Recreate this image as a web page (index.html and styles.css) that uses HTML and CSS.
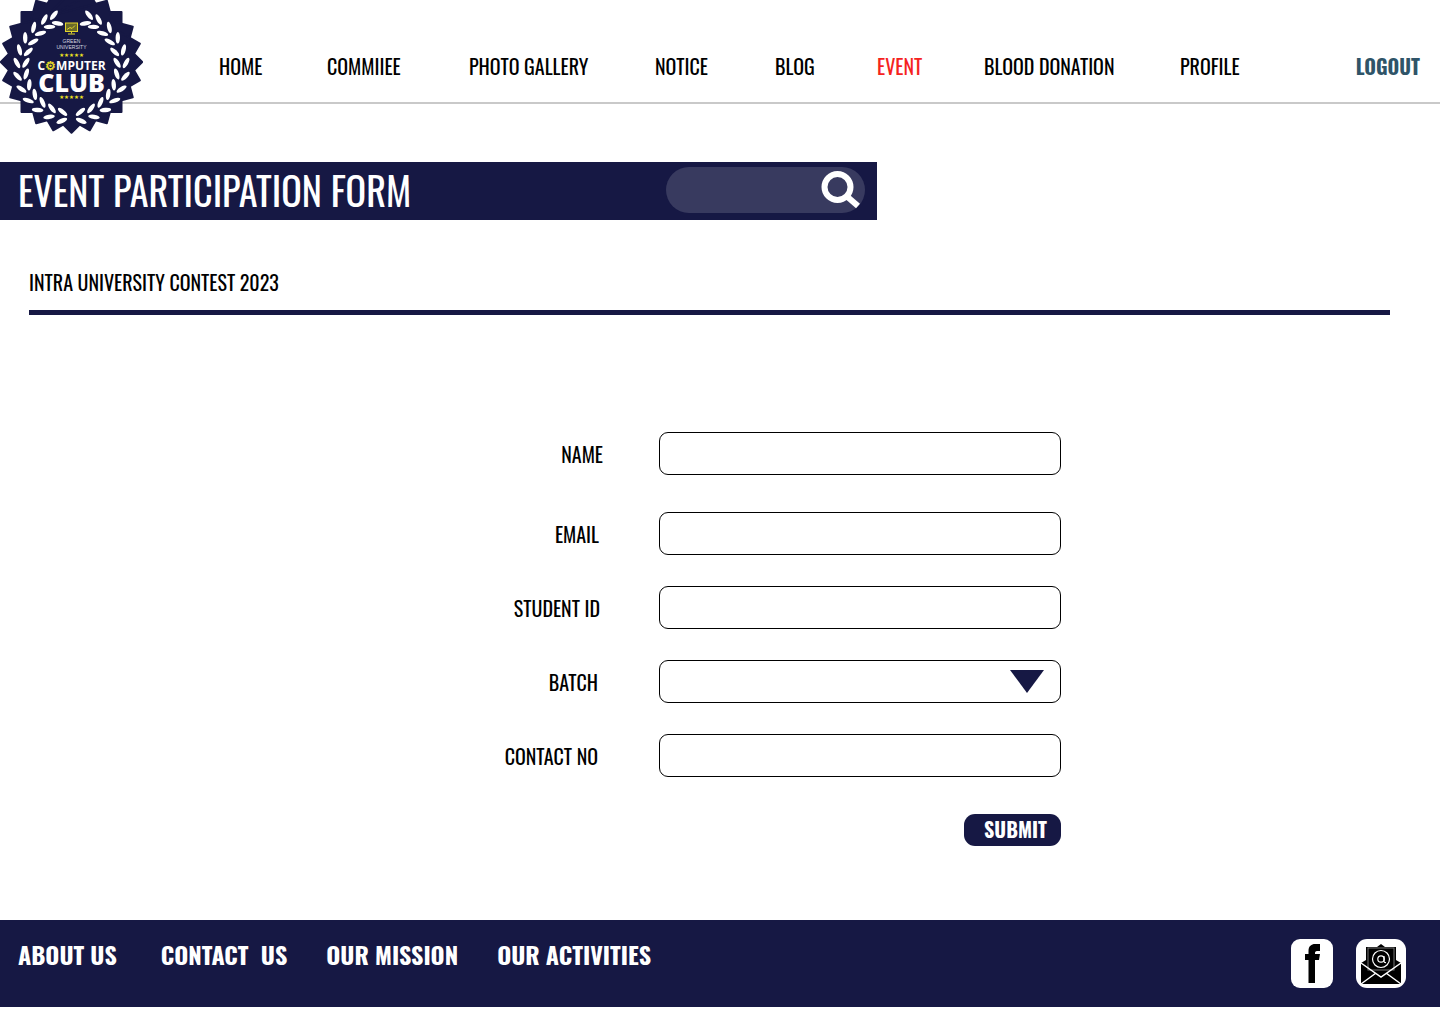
FILE: index.html
```html
<!DOCTYPE html>
<html lang="en">
<head>
<meta charset="utf-8">
<title>Event Participation Form</title>
<link rel="stylesheet" href="styles.css">
</head>
<body>
<header class="site-header">
  <svg class="logo" viewBox="0 9 143 134" width="143" height="134" role="img" aria-label="Green University Computer Club">
    <defs>
      <rect id="sq" x="-50" y="-50" width="100" height="100"/>
      <g id="pair">
        <ellipse cx="-5" cy="45.500" rx="5.800" ry="2.200" transform="rotate(34 -5 45.500)"/>
        <ellipse cx="-5" cy="54.500" rx="5.800" ry="2.200" transform="rotate(-28 -5 54.500)"/>
      </g>
      <g id="wreath" fill="#fff">
        <use href="#pair" transform="rotate(5)"/>
        <use href="#pair" transform="rotate(19)"/>
        <use href="#pair" transform="rotate(33)"/>
        <use href="#pair" transform="rotate(47)"/>
        <use href="#pair" transform="rotate(61)"/>
        <use href="#pair" transform="rotate(75)"/>
        <use href="#pair" transform="rotate(89)"/>
        <use href="#pair" transform="rotate(103)"/>
        <use href="#pair" transform="rotate(117)"/>
        <use href="#pair" transform="rotate(131)"/>
        <use href="#pair" transform="rotate(145)"/>
        <use href="#pair" transform="rotate(156)"/>
      </g>
    </defs>
    <g transform="translate(71.5 71)" fill="#161844" stroke="#161844" stroke-width="2" stroke-linejoin="round">
      <use href="#sq"/>
      <use href="#sq" transform="rotate(15)"/>
      <use href="#sq" transform="rotate(30)"/>
      <use href="#sq" transform="rotate(45)"/>
      <use href="#sq" transform="rotate(60)"/>
      <use href="#sq" transform="rotate(75)"/>
    </g>
    <use href="#wreath" transform="translate(71.5 76)"/>
    <use href="#wreath" transform="translate(71.5 76) scale(-1 1)"/>
    <g fill="none" stroke="#e3d52b" stroke-width="1">
      <rect x="65.500" y="32" width="12" height="8.500" fill="#6a6a2a"/>
      <path d="M71.500 40.500v2M68 43h7M67 38.500l3-2 2 1 3-3"/>
    </g>
    <text class="logo-small" x="71.500" y="52">GREEN</text>
    <text class="logo-small" x="71.500" y="58">UNIVERSITY</text>
    <text class="logo-stars" x="71.500" y="66">★★★★★</text>
    <text class="logo-computer" x="71.500" y="79">C<tspan fill="#e3d52b">⚙</tspan>MPUTER</text>
    <text class="logo-club" x="71.500" y="101">CLUB</text>
    <text class="logo-stars" x="71.500" y="108">★★★★★</text>
  </svg>
  <nav class="main-nav">
    <a>HOME</a>
    <a>COMMIIEE</a>
    <a>PHOTO GALLERY</a>
    <a>NOTICE</a>
    <a>BLOG</a>
    <a class="is-active">EVENT</a>
    <a>BLOOD DONATION</a>
    <a>PROFILE</a>
    <a class="logout">LOGOUT</a>
  </nav>
</header>

<main>
  <section class="title-bar">
    <h1>EVENT PARTICIPATION FORM</h1>
    <div class="search">
      <svg viewBox="0 0 42 42" width="42" height="42" fill="none" stroke="#fff">
        <circle cx="18.500" cy="20" r="13" stroke-width="6"/>
        <path d="M28 29.500l11 9.500" stroke-width="6"/>
      </svg>
    </div>
  </section>

  <h2 class="contest">INTRA UNIVERSITY CONTEST 2023</h2>

  <form class="form">
    <div class="row row-name"><label class="label">NAME</label><input class="field"></div>
    <div class="row row-email"><label class="label">EMAIL</label><input class="field"></div>
    <div class="row row-id"><label class="label">STUDENT ID</label><input class="field"></div>
    <div class="row row-batch"><label class="label">BATCH</label>
      <div class="select-wrap"><div class="field"></div>
        <svg class="caret" viewBox="0 0 34 23" width="34" height="23"><path d="M0 0h34L17 23z" fill="#161844"/></svg>
      </div>
    </div>
    <div class="row row-batch"><label class="label">CONTACT NO</label><input class="field"></div>
    <div class="actions"><button class="submit" type="button">SUBMIT</button></div>
  </form>
</main>

<footer class="site-footer">
  <nav class="foot-nav">
    <a class="foot-first">ABOUT US</a>
    <a>CONTACT&nbsp; US</a>
    <a>OUR MISSION</a>
    <a>OUR ACTIVITIES</a>
  </nav>
  <div class="socials">
    <span class="social social-fb">
      <svg viewBox="0 0 15 39" width="15" height="39"><path d="M3.500 39V16H0v-6h3.500V7C3.500 2 6.500 0 10 0h5v7h-3c-1.500 0-2 1-2 2v1h5l-1 6h-4v23z" fill="#000"/></svg>
    </span>
    <span class="social social-mail">
      <svg viewBox="0 0 42 42" width="42" height="42">
        <path d="M21 1l4 3h11v13l5 3v21H1V20l5-3V4h11z" fill="#000"/>
        <rect x="8" y="5" width="26" height="22" fill="#000" stroke="#777" stroke-width="1"/>
        <circle cx="21" cy="16" r="8.500" fill="none" stroke="#fff" stroke-width="1.200"/>
        <circle cx="21" cy="16" r="3.200" fill="none" stroke="#fff" stroke-width="1.200"/>
        <path d="M24 13v5q0 2 2 1.500" fill="none" stroke="#fff" stroke-width="1.200"/>
        <path d="M1 20l20 14 20-14M1 41l15-11M41 41L26 30" fill="none" stroke="#fff" stroke-width="1.500"/>
      </svg>
    </span>
  </div>
</footer>
</body>
</html>
```
FILE: styles.css
```css
* { box-sizing: border-box; }
html, body { margin: 0; padding: 0; }
body {
  background: #fff;
  color: #000;
  font-family: Oswald, "Open Sans", sans-serif;
  font-weight: 400;
  height: 1024px;
  overflow: hidden;
}

.site-header {
  position: relative;
  height: 104px;
  border-bottom: 2px solid #c9c9c9;
  padding: 51px 20px 0 219px;
}
.logo { position: absolute; left: 0; top: 0; z-index: 2; }
.logo-small { font: 5px "Liberation Sans", sans-serif; fill: #d8d8e0; text-anchor: middle; }
.logo-stars { font: 5.500px "DejaVu Sans", sans-serif; fill: #f1e61e; text-anchor: middle; }
.logo-computer { font: 700 12px "Open Sans", sans-serif; fill: #fff; text-anchor: middle; }
.logo-club { font: 800 25px "Open Sans", sans-serif; fill: #fff; text-anchor: middle; }

.main-nav {
  display: grid;
  grid-template-columns: 108px 142px 186px 120px 102px 107px 196px 1fr auto;
  font-size: 20px;
  line-height: 30px;
}
.main-nav a { white-space: nowrap; }
.is-active { color: #f5231e; }
.logout { color: #2f5468; font-weight: 700; }

.title-bar {
  display: flex;
  align-items: center;
  justify-content: space-between;
  width: 877px;
  height: 58px;
  margin-top: 58px;
  padding: 0 12px 0 18px;
  background: #161844;
  color: #fff;
}
.title-bar h1 { margin: 0 0 2px; font-size: 38.200px; font-weight: 400; line-height: 56px; white-space: nowrap; }
.search {
  display: flex;
  align-items: flex-start;
  justify-content: flex-end;
  width: 199px;
  height: 46px;
  margin-bottom: 2px;
  padding-right: 4px;
  border-radius: 23px;
  background: #383a5f;
}

.contest {
  margin: 0 50px 0 29px;
  padding: 47px 0 13px;
  border-bottom: 5px solid #161844;
  font-size: 20px;
  font-weight: 400;
  line-height: 30px;
}

.form { width: 1061px; margin-top: 117px; }
.row {
  display: grid;
  grid-template-columns: 603px 56px 402px;
  align-items: center;
  margin-bottom: 31px;
}
.row > :last-child { grid-column: 3; }
.row-name { margin-bottom: 37px; }
.label { font-size: 20px; line-height: 30px; text-align: right; padding-top: 1px; }
.row-email .label { padding-right: 4px; }
.row-id .label { padding-right: 3px; }
.row-batch .label { padding-right: 5px; }
.field {
  display: block;
  width: 402px;
  height: 43px;
  padding: 0 10px;
  border: 1px solid #000;
  border-radius: 9px;
  background: #fff;
}
.select-wrap { position: relative; }
.caret { position: absolute; left: 351px; top: 10px; }

.actions { display: flex; justify-content: flex-end; margin-top: 37px; }
.submit {
  width: 97px;
  height: 32px;
  padding: 0 0 2px 6px;
  border: 0;
  border-radius: 11px;
  background: #161844;
  color: #fff;
  font: 700 20px/30px Oswald, "Open Sans", sans-serif;
}

.site-footer {
  display: flex;
  justify-content: space-between;
  height: 87px;
  margin-top: 74px;
  padding: 14px 34px 0 18px;
  background: #161844;
  color: #fff;
}
.foot-nav { display: flex; gap: 39px; font-size: 24px; font-weight: 700; line-height: 40px; white-space: nowrap; }
.foot-first { margin-right: 5px; }
.socials { display: flex; gap: 23px; padding-top: 5px; }
.social {
  display: flex;
  align-items: center;
  justify-content: center;
  height: 49px;
  border-radius: 9px;
  background: #fff;
}
.social-fb { width: 42px; }
.social-mail { width: 50px; border-radius: 11px; }
```
